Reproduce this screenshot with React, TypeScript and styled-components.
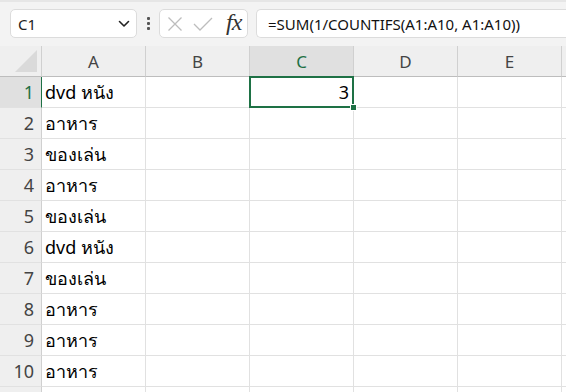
import React from 'react';
import styled, { createGlobalStyle } from 'styled-components';

const GlobalStyle = createGlobalStyle`
  html, body {
    margin: 0;
    padding: 0;
    background: #ffffff;
    overflow: hidden;
  }
  body {
    font-family: "Noto Sans", "Open Sans", sans-serif;
  }
`;

const colors = {
  toolbar: '#f3f3f3',
  header: '#efefef',
  headerSelected: '#e0e0e0',
  headerText: '#444444',
  green: '#1e7145',
  grid: '#e1e1e1',
  headerLine: '#d0d0d0',
};

const Page = styled.div`
  width: 566px;
  height: 392px;
  overflow: hidden;
  display: flex;
  flex-direction: column;
`;

const Toolbar = styled.div`
  height: 46px;
  flex-shrink: 0;
  background: ${colors.toolbar};
  border-top: 2px solid #e6e6e6;
  display: flex;
  align-items: flex-start;
  padding: 7px 0 0 10px;
  box-sizing: border-box;
`;

const Box = styled.div<{ $width: number }>`
  width: ${(p) => p.$width}px;
  height: 29px;
  background: #ffffff;
  border: 1px solid #dcdcdc;
  border-radius: 5px;
  box-sizing: border-box;
  display: flex;
  align-items: center;
  flex-shrink: 0;
`;

const NameText = styled.span`
  flex: 1;
  padding-left: 7px;
  font-size: 15px;
  color: #222;
`;

const Chevron = styled.svg`
  margin-right: 6px;
`;

const Dots = styled.div`
  width: 27px;
  display: flex;
  flex-direction: column;
  align-items: center;
  gap: 2px;
  padding-top: 8px;
  & > span {
    width: 3px;
    height: 3px;
    background: #555;
    border-radius: 1px;
  }
`;

const IconRow = styled.div`
  display: flex;
  align-items: center;
  padding-left: 7px;
  gap: 10px;
`;

const Fx = styled.span`
  font-family: "Liberation Serif", "DejaVu Serif", serif;
  font-style: italic;
  font-size: 24px;
  color: #333;
  margin-left: 3px;
  letter-spacing: -1px;
  line-height: 1;
  padding-bottom: 3px;
`;

const FormulaBox = styled(Box)`
  margin-left: 8px;
  border-radius: 5px 0 0 5px;
  border-right: none;
  padding-left: 11px;
  font-size: 15px;
  color: #111;
  white-space: nowrap;
`;

const Sheet = styled.div`
  display: grid;
  grid-template-columns: 42px repeat(5, 104px) 1fr;
  grid-auto-rows: 31px;
  flex: 1;
`;

const Corner = styled.div`
  background: ${colors.header};
  border-right: 1px solid ${colors.headerLine};
  border-bottom: 1px solid #bdbdbd;
  position: relative;
  overflow: hidden;
  &::after {
    content: '';
    position: absolute;
    right: 4px;
    bottom: 4px;
    width: 0;
    height: 0;
    border-left: 22px solid transparent;
    border-bottom: 22px solid #dadada;
  }
`;

const ColHead = styled.div<{ $selected?: boolean }>`
  background: ${(p) => (p.$selected ? colors.headerSelected : colors.header)};
  color: ${(p) => (p.$selected ? colors.green : colors.headerText)};
  border-right: 1px solid ${colors.headerLine};
  border-bottom: 1px solid ${(p) => (p.$selected ? colors.green : '#bdbdbd')};
  display: flex;
  align-items: center;
  justify-content: center;
  font-size: 17px;
  padding-top: 1px;
`;

const RowHead = styled.div<{ $selected?: boolean }>`
  background: ${(p) => (p.$selected ? colors.headerSelected : colors.header)};
  color: ${(p) => (p.$selected ? colors.green : colors.headerText)};
  border-right: 1px solid ${(p) => (p.$selected ? colors.green : colors.headerLine)};
  border-bottom: 1px solid ${colors.grid};
  display: flex;
  align-items: center;
  justify-content: flex-end;
  padding-right: 7px;
  font-size: 18px;
`;

const Cell = styled.div<{ $align?: 'left' | 'right' }>`
  border-right: 1px solid ${colors.grid};
  border-bottom: 1px solid ${colors.grid};
  display: flex;
  align-items: center;
  justify-content: ${(p) => (p.$align === 'right' ? 'flex-end' : 'flex-start')};
  padding: 0 4px 0 3px;
  font-size: 18px;
  color: #000;
  white-space: nowrap;
  position: relative;
`;

const Selection = styled.div`
  position: absolute;
  z-index: 2;
  left: -1px;
  top: -1px;
  right: -1px;
  bottom: -1px;
  border: 2px solid ${colors.green};
  pointer-events: none;
  &::after {
    content: '';
    position: absolute;
    right: -5px;
    bottom: -5px;
    width: 5px;
    height: 5px;
    background: ${colors.green};
    border: 1px solid #fff;
  }
`;

const columns = ['A', 'B', 'C', 'D', 'E'];
const dataA = [
  'dvd หนัง',
  'อาหาร',
  'ของเล่น',
  'อาหาร',
  'ของเล่น',
  'dvd หนัง',
  'ของเล่น',
  'อาหาร',
  'อาหาร',
  'อาหาร',
  '',
];

export default function App() {
  return (
    <Page>
      <GlobalStyle />
      <Toolbar>
        <Box $width={127}>
          <NameText>C1</NameText>
          <Chevron width="12" height="8" viewBox="0 0 12 8">
            <path d="M1.5 1.5 L6 6 L10.5 1.5" fill="none" stroke="#222" strokeWidth="1.6" strokeLinecap="round" strokeLinejoin="round" />
          </Chevron>
        </Box>
        <Dots>
          <span />
          <span />
          <span />
        </Dots>
        <Box $width={89}>
          <IconRow>
            <svg width="16" height="16" viewBox="0 0 16 16">
              <path d="M1.5 1.5 L14.5 14.5 M14.5 1.5 L1.5 14.5" stroke="#bdbdbd" strokeWidth="1.3" fill="none" />
            </svg>
            <svg width="20" height="14" viewBox="0 0 20 14">
              <path d="M1 7 L7 13 L19 1" stroke="#bdbdbd" strokeWidth="1.3" fill="none" />
            </svg>
            <Fx>fx</Fx>
          </IconRow>
        </Box>
        <FormulaBox $width={310}>=SUM(1/COUNTIFS(A1:A10, A1:A10))</FormulaBox>
      </Toolbar>
      <Sheet>
        <Corner />
        {columns.map((c) => (
          <ColHead key={c} $selected={c === 'C'}>
            {c}
          </ColHead>
        ))}
        <ColHead />
        {dataA.map((val, i) => (
          <React.Fragment key={i}>
            <RowHead $selected={i === 0}>{i < 10 ? i + 1 : ''}</RowHead>
            <Cell>{val}</Cell>
            <Cell />
            <Cell $align="right">
              {i === 0 ? '3' : ''}
              {i === 0 && <Selection />}
            </Cell>
            <Cell />
            <Cell />
            <Cell />
          </React.Fragment>
        ))}
      </Sheet>
    </Page>
  );
}
